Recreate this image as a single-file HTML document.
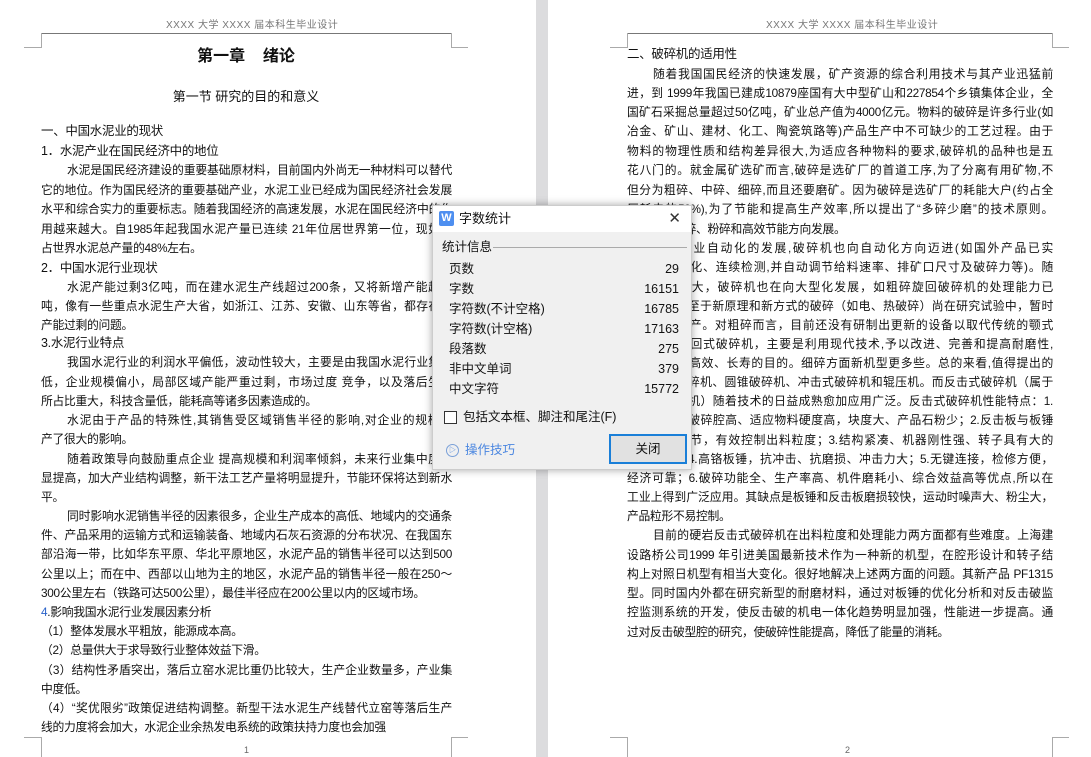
<!DOCTYPE html>
<html><head><meta charset="utf-8">
<style>
*{margin:0;padding:0;box-sizing:border-box}
body{width:1091px;height:757px;overflow:hidden;background:#fff;position:relative;font-family:"Liberation Sans","Noto Sans CJK SC","WenQuanYi Zen Hei",sans-serif;color:#111}
.gap{position:absolute;left:536px;top:0;width:12px;height:757px;background:#dcdcde}
.l{position:absolute;height:20px;line-height:20px;font-size:11.8px;letter-spacing:-0.3px;white-space:nowrap;overflow:hidden}
.j{text-align:justify;text-align-last:justify}
.L{left:41px;width:411px}
.R{left:627px;width:426px}
.in{padding-left:26px}
.hdr{position:absolute;font-size:10px;color:#777;top:16px;letter-spacing:0.5px}
.hl{position:absolute;top:33px;height:1px;background:#777}
.cm{position:absolute;border-color:#aaa;border-style:solid;border-width:0}
.pn{position:absolute;top:745px;font-size:9px;color:#666}
.dlg{position:absolute;left:432px;top:205px;width:260px;height:265px;background:#f0f0f0;box-shadow:0 0 8px rgba(0,0,0,.35);border:1px solid #ccc}
.dt{height:26px;background:#fff;position:relative;font-size:13px;line-height:26px}
.row{position:absolute;left:16px;width:230px;font-size:12.5px;height:20px;line-height:20px}
.row span{position:absolute;right:0}
</style></head><body>
<div class="gap"></div>

<div class="hdr" style="left:166px">XXXX 大学 XXXX 届本科生毕业设计</div>
<div class="hl" style="left:41px;width:411px"></div>
<div class="cm" style="left:41px;top:33px;height:15px;border-left-width:1px"></div>
<div class="cm" style="left:24px;top:47px;width:17px;border-top-width:1px"></div>
<div class="cm" style="left:451px;top:33px;height:15px;border-left-width:1px"></div>
<div class="cm" style="left:451px;top:47px;width:17px;border-top-width:1px"></div>

<div class="l" style="left:0;width:492px;top:46px;height:22px;line-height:22px;text-align:center;font-weight:bold;font-size:16px;letter-spacing:0">第一章&nbsp;&nbsp;&nbsp;&nbsp;绪论</div>
<div class="l" style="left:0;width:492px;top:87px;text-align:center;font-size:13px;letter-spacing:0">第一节 研究的目的和意义</div>

<div class="l L" style="top:121px;font-size:12.5px">一、中国水泥业的现状</div>
<div class="l L" style="top:141px;font-size:12.5px">1．水泥产业在国民经济中的地位</div>
<div class="l L j in" style="top:160px">水泥是国民经济建设的重要基础原材料，目前国内外尚无一种材料可以替代</div>
<div class="l L j" style="top:180px">它的地位。作为国民经济的重要基础产业，水泥工业已经成为国民经济社会发展</div>
<div class="l L j" style="top:199px">水平和综合实力的重要标志。随着我国经济的高速发展，水泥在国民经济中的作</div>
<div class="l L j" style="top:219px">用越来越大。自1985年起我国水泥产量已连续 21年位居世界第一位，现如今</div>
<div class="l L" style="top:238px">占世界水泥总产量的48%左右。</div>
<div class="l L" style="top:258px;font-size:12.5px">2．中国水泥行业现状</div>
<div class="l L j in" style="top:277px">水泥产能过剩3亿吨，而在建水泥生产线超过200条，又将新增产能超过</div>
<div class="l L j" style="top:296px">吨，像有一些重点水泥生产大省，如浙江、江苏、安徽、山东等省，都存在水</div>
<div class="l L" style="top:315px">产能过剩的问题。</div>
<div class="l L" style="top:333px;font-size:12.5px">3.水泥行业特点</div>
<div class="l L j in" style="top:352px">我国水泥行业的利润水平偏低，波动性较大，主要是由我国水泥行业集中</div>
<div class="l L j" style="top:372px">低，企业规模偏小，局部区域产能严重过剩，市场过度 竞争，以及落后生产</div>
<div class="l L" style="top:391px">所占比重大，科技含量低，能耗高等诸多因素造成的。</div>
<div class="l L j in" style="top:410px">水泥由于产品的特殊性,其销售受区域销售半径的影响,对企业的规模化</div>
<div class="l L" style="top:429px">产了很大的影响。</div>
<div class="l L j in" style="top:449px">随着政策导向鼓励重点企业 提高规模和利润率倾斜，未来行业集中度将</div>
<div class="l L j" style="top:468px">显提高，加大产业结构调整，新干法工艺产量将明显提升，节能环保将达到新水</div>
<div class="l L" style="top:487px">平。</div>
<div class="l L j in" style="top:506px">同时影响水泥销售半径的因素很多，企业生产成本的高低、地域内的交通条</div>
<div class="l L j" style="top:525px">件、产品采用的运输方式和运输装备、地域内石灰石资源的分布状况、在我国东</div>
<div class="l L j" style="top:544px">部沿海一带，比如华东平原、华北平原地区，水泥产品的销售半径可以达到500</div>
<div class="l L j" style="top:564px">公里以上；而在中、西部以山地为主的地区，水泥产品的销售半径一般在250～</div>
<div class="l L" style="top:583px">300公里左右（铁路可达500公里），最佳半径应在200公里以内的区域市场。</div>
<div class="l L" style="top:602px"><span style="color:#2a62c9">4</span>.影响我国水泥行业发展因素分析</div>
<div class="l L" style="top:621px">（1）整体发展水平粗放，能源成本高。</div>
<div class="l L" style="top:640px">（2）总量供大于求导致行业整体效益下滑。</div>
<div class="l L j" style="top:660px">（3）结构性矛盾突出，落后立窑水泥比重仍比较大，生产企业数量多，产业集</div>
<div class="l L" style="top:679px">中度低。</div>
<div class="l L j" style="top:698px">（4）“奖优限劣”政策促进结构调整。新型干法水泥生产线替代立窑等落后生产</div>
<div class="l L" style="top:717px">线的力度将会加大，水泥企业余热发电系统的政策扶持力度也会加强</div>
<div class="cm" style="left:41px;top:737px;height:20px;border-left-width:1px"></div>
<div class="cm" style="left:24px;top:737px;width:17px;border-top-width:1px"></div>
<div class="cm" style="left:451px;top:737px;height:20px;border-left-width:1px"></div>
<div class="cm" style="left:451px;top:737px;width:17px;border-top-width:1px"></div>
<div class="pn" style="left:244px">1</div>

<div class="hdr" style="left:766px">XXXX 大学 XXXX 届本科生毕业设计</div>
<div class="hl" style="left:627px;width:426px"></div>
<div class="cm" style="left:627px;top:33px;height:15px;border-left-width:1px"></div>
<div class="cm" style="left:610px;top:47px;width:17px;border-top-width:1px"></div>
<div class="cm" style="left:1052px;top:33px;height:15px;border-left-width:1px"></div>
<div class="cm" style="left:1052px;top:47px;width:17px;border-top-width:1px"></div>

<div class="l R" style="top:44px;font-size:12.5px">二、破碎机的适用性</div>
<div class="l R j in" style="top:64px">随着我国国民经济的快速发展，矿产资源的综合利用技术与其产业迅猛前</div>
<div class="l R j" style="top:83px">进，到 1999年我国已建成10879座国有大中型矿山和227854个乡镇集体企业，全</div>
<div class="l R j" style="top:102px">国矿石采掘总量超过50亿吨，矿业总产值为4000亿元。物料的破碎是许多行业(如</div>
<div class="l R j" style="top:121px">冶金、矿山、建材、化工、陶瓷筑路等)产品生产中不可缺少的工艺过程。由于</div>
<div class="l R j" style="top:141px">物料的物理性质和结构差异很大,为适应各种物料的要求,破碎机的品种也是五</div>
<div class="l R j" style="top:160px">花八门的。就金属矿选矿而言,破碎是选矿厂的首道工序,为了分离有用矿物,不</div>
<div class="l R j" style="top:180px">但分为粗碎、中碎、细碎,而且还要磨矿。因为破碎是选矿厂的耗能大户(约占全</div>
<div class="l R j" style="top:199px">厂耗电的50%),为了节能和提高生产效率,所以提出了“多碎少磨”的技术原则。</div>
<div class="l R" style="top:219px">破碎机向细碎、粉碎和高效节能方向发展。</div>
<div class="l R j in" style="top:238px">随着工业自动化的发展,破碎机也向自动化方向迈进(如国外产品已实</div>
<div class="l R j" style="top:257px">现机电一体化、连续检测,并自动调节给料速率、排矿口尺寸及破碎力等)。随</div>
<div class="l R j" style="top:277px">着规模的扩大，破碎机也在向大型化发展，如粗碎旋回破碎机的处理能力已</div>
<div class="l R j" style="top:296px">达数千吨。至于新原理和新方式的破碎（如电、热破碎）尚在研究试验中，暂时</div>
<div class="l R j" style="top:315px">不能用于生产。对粗碎而言，目前还没有研制出更新的设备以取代传统的颚式</div>
<div class="l R j" style="top:334px">破碎机和旋回式破碎机，主要是利用现代技术,予以改进、完善和提高耐磨性,</div>
<div class="l R j" style="top:353px">达到节能、高效、长寿的目的。细碎方面新机型更多些。总的来看,值得提出的</div>
<div class="l R j" style="top:372px">是反击式破碎机、圆锥破碎机、冲击式破碎机和辊压机。而反击式破碎机（属于</div>
<div class="l R j" style="top:391px">冲击式破碎机）随着技术的日益成熟愈加应用广泛。反击式破碎机性能特点：1.</div>
<div class="l R j" style="top:410px">破碎比大、破碎腔高、适应物料硬度高，块度大、产品石粉少；2.反击板与板锤</div>
<div class="l R j" style="top:430px">间隙方便调节，有效控制出料粒度；3.结构紧凑、机器刚性强、转子具有大的</div>
<div class="l R j" style="top:449px">转动惯量；4.高铬板锤，抗冲击、抗磨损、冲击力大；5.无键连接，检修方便，</div>
<div class="l R j" style="top:468px">经济可靠；6.破碎功能全、生产率高、机件磨耗小、综合效益高等优点,所以在</div>
<div class="l R j" style="top:487px">工业上得到广泛应用。其缺点是板锤和反击板磨损较快，运动时噪声大、粉尘大，</div>
<div class="l R" style="top:506px">产品粒形不易控制。</div>
<div class="l R j in" style="top:525px">目前的硬岩反击式破碎机在出料粒度和处理能力两方面都有些难度。上海建</div>
<div class="l R j" style="top:545px">设路桥公司1999 年引进美国最新技术作为一种新的机型，在腔形设计和转子结</div>
<div class="l R j" style="top:564px">构上对照日机型有相当大变化。很好地解决上述两方面的问题。其新产品 PF1315</div>
<div class="l R j" style="top:583px">型。同时国内外都在研究新型的耐磨材料，通过对板锤的优化分析和对反击破监</div>
<div class="l R j" style="top:602px">控监测系统的开发，使反击破的机电一体化趋势明显加强，性能进一步提高。通</div>
<div class="l R" style="top:622px">过对反击破型腔的研究，使破碎性能提高，降低了能量的消耗。</div>
<div class="cm" style="left:627px;top:737px;height:20px;border-left-width:1px"></div>
<div class="cm" style="left:610px;top:737px;width:17px;border-top-width:1px"></div>
<div class="cm" style="left:1052px;top:737px;height:20px;border-left-width:1px"></div>
<div class="cm" style="left:1052px;top:737px;width:17px;border-top-width:1px"></div>
<div class="pn" style="left:845px">2</div>

<div class="dlg">
 <div class="dt">
  <div style="position:absolute;left:6px;top:5px;width:15px;height:15px;background:#4e8ff0;border-radius:2px;color:#fff;font-size:11px;line-height:15px;text-align:center;font-weight:bold">W</div>
  <span style="position:absolute;left:26px;top:0">字数统计</span>
  <span style="position:absolute;right:10px;top:0;font-size:15px;color:#333;font-weight:300">✕</span>
 </div>
 <div style="position:absolute;left:9px;top:32px;font-size:12.5px;line-height:18px">统计信息</div>
 <div style="position:absolute;left:60px;top:41px;width:194px;height:1px;background:#aaa"></div>
 <div class="row" style="top:53px">页数<span>29</span></div>
 <div class="row" style="top:73px">字数<span>16151</span></div>
 <div class="row" style="top:93px">字符数(不计空格)<span>16785</span></div>
 <div class="row" style="top:113px">字符数(计空格)<span>17163</span></div>
 <div class="row" style="top:133px">段落数<span>275</span></div>
 <div class="row" style="top:153px">非中文单词<span>379</span></div>
 <div class="row" style="top:173px">中文字符<span>15772</span></div>
 <div style="position:absolute;left:11px;top:205px;width:13px;height:13px;border:1px solid #333;background:#fff"></div>
 <div style="position:absolute;left:30px;top:202px;font-size:12.5px;line-height:18px">包括文本框、脚注和尾注(F)</div>
 <div style="position:absolute;left:13px;top:238px;width:13px;height:13px;border:1px solid #7aa0d8;border-radius:50%;font-size:7px;color:#4a86e0;text-align:center;line-height:11px">▷</div>
 <div style="position:absolute;left:32px;top:235px;font-size:12.5px;color:#4a86e0;line-height:18px">操作技巧</div>
 <div style="position:absolute;left:176px;top:228px;width:78px;height:30px;border:2px solid #1a7fd8;background:#e1e1e1;text-align:center;line-height:26px;font-size:12.5px">关闭</div>
</div>
</body></html>
